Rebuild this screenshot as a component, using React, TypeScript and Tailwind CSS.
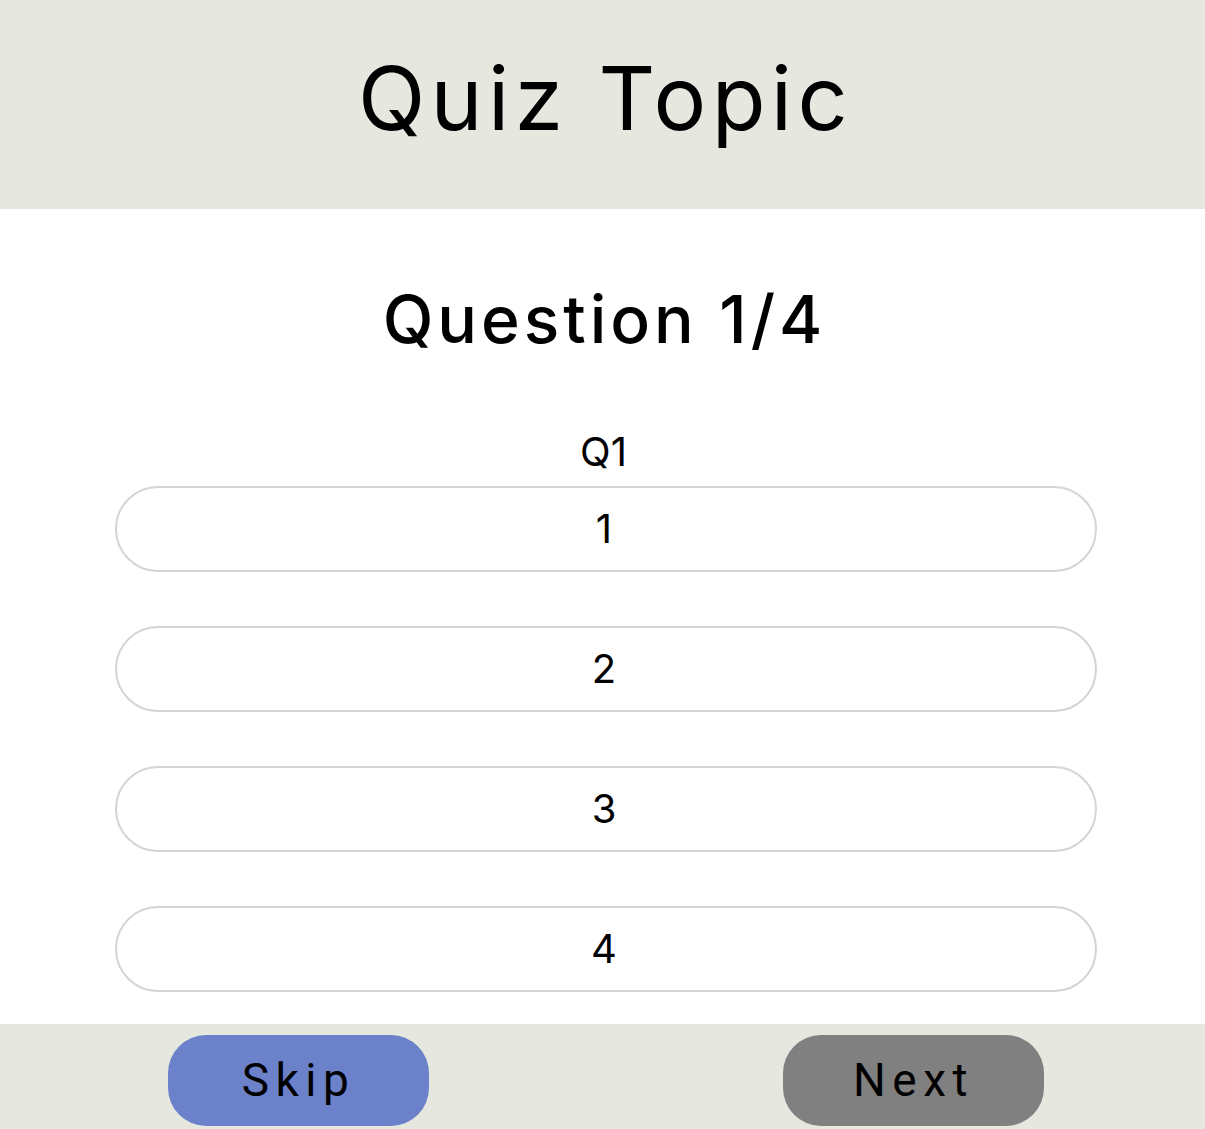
import React from "react";

const options = ["1", "2", "3", "4"];

export default function App() {
  return (
    <div className="w-[1205px] min-h-[1129px] bg-white text-black" style={{ fontFamily: "Inter, 'Open Sans', sans-serif" }}>
      <header className="h-[209px] bg-[#e6e8e0] flex items-center justify-center pb-[14px]">
        <h1 className="text-[88px] leading-none font-normal tracking-[0.06em] pl-[6px]">Quiz Topic</h1>
      </header>

      <main className="flex flex-col pt-[70px] h-[815px]">
        <h2 className="text-center text-[66px] leading-[80px] font-medium tracking-[0.06em] pl-[4px]">Question 1/4</h2>
        <p className="mt-[69px] text-center text-[40px] leading-[48px] pl-[2px]">Q1</p>
        <div className="mt-[10px] ml-[115px] w-[982px] flex flex-col gap-[54px]">
          {options.map((opt) => (
            <button
              key={opt}
              className="h-[86px] w-full rounded-full border-2 border-[#d4d4d4] bg-white text-[40px] leading-none flex items-center justify-center pr-[4px]"
            >
              {opt}
            </button>
          ))}
        </div>
      </main>

      <footer className="h-[105px] bg-[#e6e8e0] flex items-start justify-between pl-[168px] pr-[161px] pt-[11px]">
        <button
          className="w-[261px] h-[91px] rounded-[38px] bg-[#6b81c9] text-[46px] tracking-[0.14em] flex items-center justify-center"
          style={{ fontFamily: "Roboto, sans-serif" }}
        >
          Skip
        </button>
        <button
          className="w-[261px] h-[91px] rounded-[38px] bg-[#808080] text-[46px] tracking-[0.14em] flex items-center justify-center"
          style={{ fontFamily: "Roboto, sans-serif" }}
        >
          Next
        </button>
      </footer>
    </div>
  );
}
